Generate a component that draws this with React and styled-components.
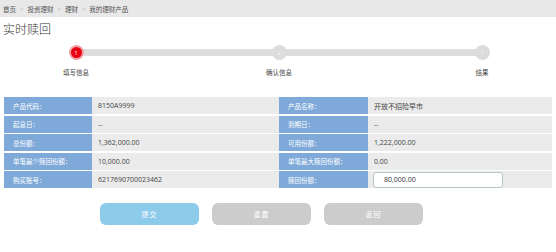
import React from 'react';
import styled, { createGlobalStyle } from 'styled-components';

const GlobalStyle = createGlobalStyle`
  html, body {
    margin: 0;
    padding: 0;
    background: #fff;
  }
  body {
    font-family: "Open Sans", "Noto Sans CJK SC", sans-serif;
    color: #333;
  }
`;

const Page = styled.div`
  width: 556px;
  height: 252px;
  overflow: hidden;
  display: flex;
  flex-direction: column;
`;

const Breadcrumb = styled.nav`
  height: 17px;
  background: #e8e8e8;
  display: flex;
  align-items: center;
  gap: 4px;
  padding-left: 3px;
  font-size: 6.5px;
  color: #555;
`;

const Sep = styled.span`
  color: #aaa;
  font-size: 6px;
`;

const Title = styled.h1`
  margin: 5px 0 0 3px;
  font-size: 12px;
  font-weight: 300;
  line-height: 15px;
  color: #333;
`;

const Steps = styled.div`
  display: flex;
  align-items: flex-start;
  margin: 8px 0 0 56px;
  width: 446px;
`;

const Step = styled.div`
  width: 40px;
  display: flex;
  flex-direction: column;
  align-items: center;
  position: relative;
  z-index: 1;
`;

const Dot = styled.div`
  width: ${p => (p.$active ? '11px' : '15px')};
  height: ${p => (p.$active ? '11px' : '15px')};
  margin: ${p => (p.$active ? '2px' : '0')};
  border-radius: 50%;
  background: ${p => (p.$active ? '#e60012' : '#dcdcdc')};
  box-shadow: ${p => (p.$active ? '0 0 0 2px #f4a3a3' : 'none')};
  color: ${p => (p.$active ? '#fff' : '#efefef')};
  font-size: 6px;
  display: flex;
  align-items: center;
  justify-content: center;
`;

const StepLabel = styled.div`
  margin-top: 7px;
  font-size: 6.5px;
  color: #444;
  white-space: nowrap;
`;

const Track = styled.div`
  flex: 1;
  height: 7px;
  margin: 4px -14px 0;
  background: #dedede;
`;

const Grid = styled.div`
  display: grid;
  grid-template-columns: 88px 187px 89px 184px;
  grid-auto-rows: 17px;
  row-gap: 1.5px;
  margin: 20px 0 0 4px;
`;

const Label = styled.div`
  background: #7ea9d9;
  color: #fff;
  font-size: 6.5px;
  display: flex;
  align-items: center;
  padding-left: 9px;
`;

const Value = styled.div`
  background: #ebebeb;
  color: #444;
  font-size: 7px;
  display: flex;
  align-items: center;
  padding-left: 6px;
`;

const Input = styled.input`
  box-sizing: border-box;
  width: 130px;
  height: 16px;
  margin-left: -1px;
  border: 1px solid #b8c4cc;
  border-radius: 3px;
  background: #fff;
  padding: 0 0 0 10px;
  font-family: "Open Sans", sans-serif;
  font-size: 7px;
  color: #333;
  outline: none;
`;

const Actions = styled.div`
  display: flex;
  gap: 13px;
  margin: 15px 0 0 100px;
`;

const Button = styled.button`
  width: 99px;
  height: 22px;
  border: none;
  border-radius: 6px;
  background: ${p => (p.$primary ? '#8ccbe9' : '#cccccc')};
  color: #fff;
  font-family: "Noto Sans CJK SC", sans-serif;
  font-size: 7px;
  letter-spacing: 1px;
  cursor: pointer;
`;

const crumbs = ['首页', '投资理财', '理财', '我的理财产品'];

const steps = ['填写信息', '确认信息', '结果'];

const rows = [
  ['产品代码：', '8150A9999', '产品名称：', '开放不招险早市'],
  ['起息日：', '--', '到期日：', '--'],
  ['总份额：', '1,362,000.00', '可用份额：', '1,222,000.00'],
  ['单笔最少赎回份额：', '10,000.00', '单笔最大赎回份额：', '0.00'],
  ['购买账号：', '6217690700023462', '赎回份额：', null],
];

export default function App() {
  return (
    <Page>
      <GlobalStyle />
      <Breadcrumb>
        {crumbs.map((c, i) => (
          <React.Fragment key={c}>
            {i > 0 && <Sep>&gt;</Sep>}
            <span>{c}</span>
          </React.Fragment>
        ))}
      </Breadcrumb>
      <Title>实时赎回</Title>
      <Steps>
        {steps.map((s, i) => (
          <React.Fragment key={s}>
            {i > 0 && <Track />}
            <Step>
              <Dot $active={i === 0}>{i + 1}</Dot>
              <StepLabel>{s}</StepLabel>
            </Step>
          </React.Fragment>
        ))}
      </Steps>
      <Grid>
        {rows.map(r => (
          <React.Fragment key={r[0]}>
            <Label>{r[0]}</Label>
            <Value>{r[1]}</Value>
            <Label>{r[2]}</Label>
            <Value>{r[3] !== null ? r[3] : <Input defaultValue="80,000.00" />}</Value>
          </React.Fragment>
        ))}
      </Grid>
      <Actions>
        <Button $primary>提交</Button>
        <Button>重置</Button>
        <Button>返回</Button>
      </Actions>
    </Page>
  );
}
